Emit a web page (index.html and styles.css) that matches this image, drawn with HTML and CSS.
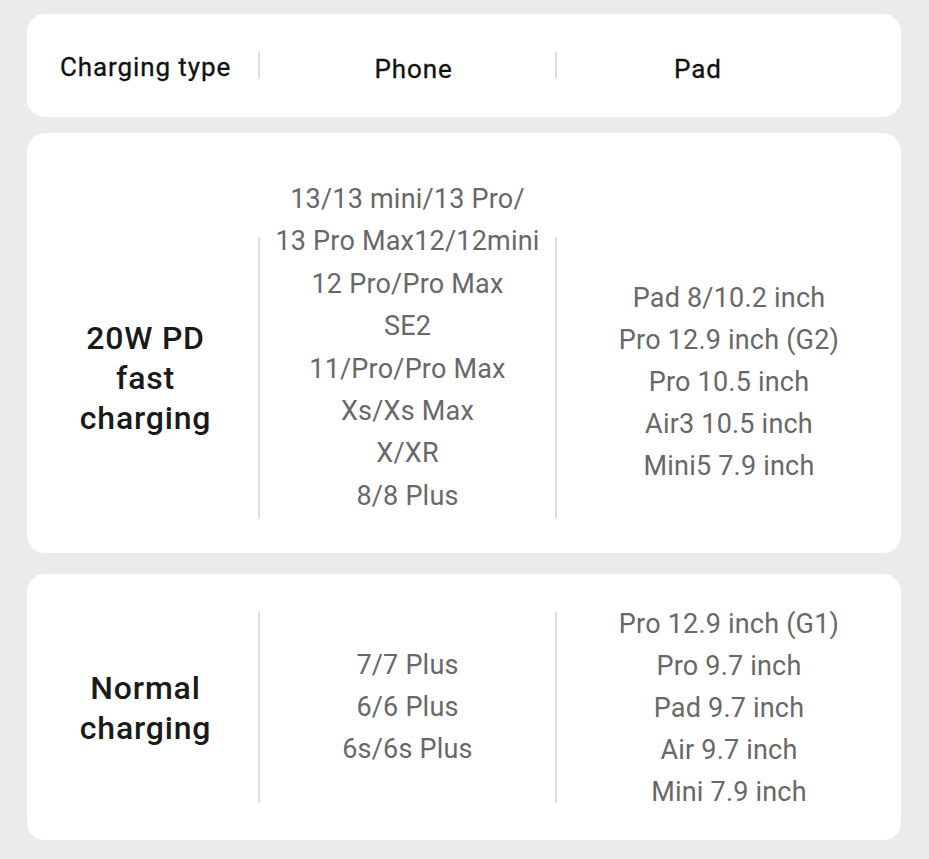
FILE: index.html
```html
<!DOCTYPE html>
<html lang="en">
<head>
<meta charset="utf-8">
<title>Charging compatibility</title>
<link rel="stylesheet" href="styles.css">
</head>
<body>
<main class="page">
  <section class="card card-head">
    <div class="cell head-type">Charging type</div>
    <div class="divider head-divider"></div>
    <div class="cell head-phone">Phone</div>
    <div class="divider head-divider"></div>
    <div class="cell head-pad">Pad</div>
  </section>

  <section class="card card-fast">
    <div class="cell label">20W PD<br>fast<br>charging</div>
    <div class="divider"></div>
    <div class="cell list phone">
      <span>13/13 mini/13 Pro/</span>
      <span>13 Pro Max12/12mini</span>
      <span>12 Pro/Pro Max</span>
      <span>SE2</span>
      <span>11/Pro/Pro Max</span>
      <span>Xs/Xs Max</span>
      <span>X/XR</span>
      <span>8/8 Plus</span>
    </div>
    <div class="divider"></div>
    <div class="cell list pad">
      <span>Pad 8/10.2 inch</span>
      <span>Pro 12.9 inch (G2)</span>
      <span>Pro 10.5 inch</span>
      <span>Air3 10.5 inch</span>
      <span>Mini5 7.9 inch</span>
    </div>
  </section>

  <section class="card card-normal">
    <div class="cell label">Normal<br>charging</div>
    <div class="divider"></div>
    <div class="cell list phone">
      <span>7/7 Plus</span>
      <span>6/6 Plus</span>
      <span>6s/6s Plus</span>
    </div>
    <div class="divider"></div>
    <div class="cell list pad">
      <span>Pro 12.9 inch (G1)</span>
      <span>Pro 9.7 inch</span>
      <span>Pad 9.7 inch</span>
      <span>Air 9.7 inch</span>
      <span>Mini 7.9 inch</span>
    </div>
  </section>
</main>
</body>
</html>
```

FILE: styles.css
```css
* { box-sizing: border-box; }

html, body {
  margin: 0;
  padding: 0;
}

body {
  background: #ebebeb;
  font-family: Roboto, "Liberation Sans", sans-serif;
  width: 929px;
  height: 859px;
  overflow: hidden;
}

.page {
  padding: 14px 28px 0 27px;
}

.card {
  background: #ffffff;
  border-radius: 18px;
  display: grid;
  grid-template-columns: 231px 2px 295px 2px 1fr;
  align-items: start;
}

.cell {
  text-align: center;
}

.divider {
  width: 2px;
  background: #dedede;
}

/* header card */
.card-head {
  height: 103px;
  padding-top: 38px;
}

.head-type,
.head-phone,
.head-pad {
  font-size: 26px;
  line-height: 30px;
  color: #111111;
  font-weight: 400;
  letter-spacing: 0.9px;
  -webkit-text-stroke: 0.3px #111111;
}

.head-type {
  padding-left: 6px;
}

.head-phone {
  padding-left: 12px;
  margin-top: 2px;
}

.head-pad {
  padding-right: 62px;
  margin-top: 2px;
}

.head-divider {
  height: 27px;
  margin-top: 0;
}

/* body cards */
.label {
  font-size: 32px;
  line-height: 40px;
  font-weight: 500;
  color: #1a1a1a;
  padding-left: 6px;
  letter-spacing: 0.8px;
}

.list {
  display: flex;
  flex-direction: column;
  align-items: center;
  font-size: 27px;
  color: #686868;
  letter-spacing: 0.2px;
}

.list span {
  display: block;
  white-space: nowrap;
}

.card-fast {
  margin-top: 16px;
  padding-top: 45px;
  padding-bottom: 34px;
}

.card-fast .phone span { line-height: 42.4px; }
.card-fast .pad span { line-height: 42px; }
.card-fast .pad { margin-top: 99px; }
.card-fast .label { margin-top: 140px; }
.card-fast .divider { margin-top: 59px; height: 282px; }

.card-normal {
  margin-top: 21px;
  padding-top: 29px;
  padding-bottom: 27px;
}

.card-normal .list span { line-height: 42px; }
.card-normal .phone { margin-top: 41px; }
.card-normal .label { margin-top: 65px; }
.card-normal .divider { margin-top: 9px; height: 191px; }
```
